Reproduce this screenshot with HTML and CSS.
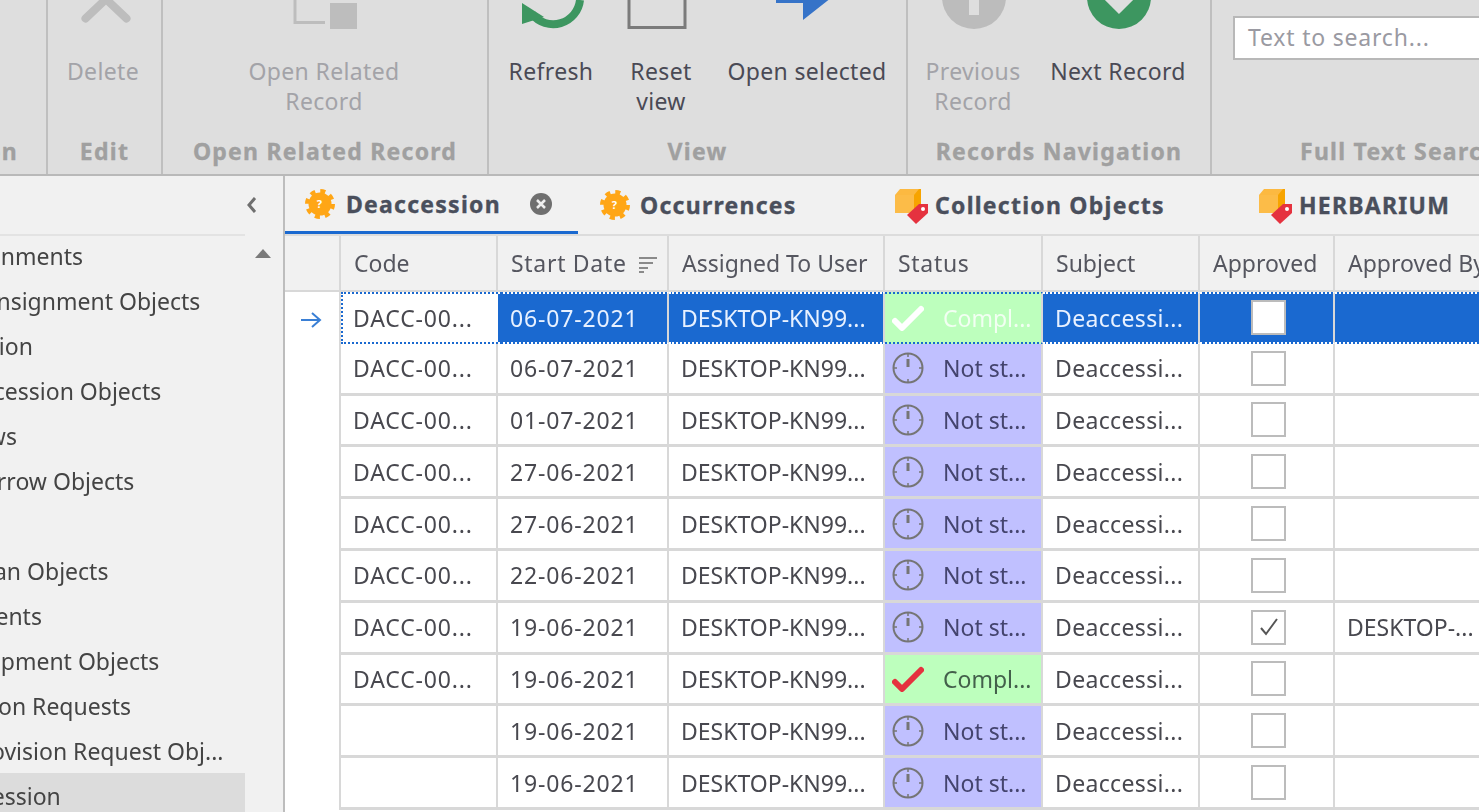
FILE: index.html
```html
<!DOCTYPE html>
<html>
<head lang="en">
<meta charset="UTF-8">
<title>Deaccession</title>
<link rel="stylesheet" href="styles.css">
</head>
<body>
<svg class="sprite">
    <symbol id="gear" viewBox="0 0 30 30">
        <circle cx="15" cy="15" r="11.5" fill="#ffa616"/>
        <circle cx="15" cy="15" r="12.5" fill="none" stroke="#ffa616" stroke-width="5" stroke-dasharray="4.9 4.9"/>
        <text x="15" y="19" text-anchor="middle" class="gear-mark">?</text>
    </symbol>
    <symbol id="cube" viewBox="0 0 34 38">
        <path d="M0 7 L5 1 H26 V24 H0 Z" fill="#fcb941"/>
        <path d="M19 7 L24 1 H26 V19 L19 25 Z" fill="#f7a400"/>
        <path d="M0 7 H19 V25 H0 Z" fill="#fcbc48"/>
        <path d="M12 27 L24 16 H33 V25 L21 36 Z" fill="#e5323f"/>
        <circle cx="28" cy="21" r="2" fill="#fff"/>
    </symbol>
    <symbol id="clock" viewBox="0 0 32 32">
        <circle cx="16" cy="16" r="14.5" fill="none" stroke="#757575" stroke-width="2"/>
        <path d="M16 7 V15" stroke="#757575" stroke-width="3"/>
        <path d="M16 2 V5 M16 27 V30 M2 16 H5 M27 16 H30" stroke="#757575" stroke-width="1.5"/>
    </symbol>
    <symbol id="tick" viewBox="0 0 32 26">
        <path d="M3 16 L10 23 L29 4" fill="none" stroke="currentColor" stroke-width="6" stroke-linecap="round" stroke-linejoin="round"/>
    </symbol>
</svg>

<header class="ribbon">
    <section class="group group-first">
        <div class="group-items"></div>
        <div class="group-title">Action</div>
    </section>
    <section class="group group-edit">
        <div class="group-items">
            <div class="btn btn-delete off">
                <svg class="btn-icon icon-delete" width="60" height="57" viewBox="0 0 60 57"><path d="M9.5 18.5 L30 -1 L50.5 18.5" fill="none" stroke="#bdbdbd" stroke-width="8" stroke-linecap="round" stroke-linejoin="round"/></svg>
                <span>Delete</span>
            </div>
        </div>
        <div class="group-title">Edit</div>
    </section>
    <section class="group group-related">
        <div class="group-items">
            <div class="btn btn-related off">
                <svg class="btn-icon" width="70" height="57" viewBox="0 0 70 57"><path d="M6 0 V22.5 H36" fill="none" stroke="#bdbdbd" stroke-width="3"/><rect x="41" y="3" width="27" height="26" fill="#bdbdbd"/></svg>
                <span>Open Related Record</span>
            </div>
        </div>
        <div class="group-title">Open Related Record</div>
    </section>
    <section class="group group-view">
        <div class="group-items">
            <div class="btn btn-refresh">
                <svg class="btn-icon icon-refresh" width="70" height="57" viewBox="0 0 70 57"><path d="M14 14 A27 27 0 0 0 62 0" fill="none" stroke="#3d9660" stroke-width="8"/><path d="M4 3 L4 24 L26 17 Z" fill="#3d9660"/></svg>
                <span>Refresh</span>
            </div>
            <div class="btn btn-reset">
                <svg class="btn-icon icon-reset" width="60" height="57" viewBox="0 0 60 57"><path d="M2 0 V27.5 H58 V0" fill="none" stroke="#7b7b7b" stroke-width="3"/></svg>
                <span>Reset view</span>
            </div>
            <div class="btn btn-open">
                <svg class="btn-icon icon-open" width="64" height="57" viewBox="0 0 64 57"><path d="M2 0 H29 V-6 H62 L29 20 V3 H2 Z" fill="#3673c8"/></svg>
                <span>Open selected</span>
            </div>
        </div>
        <div class="group-title">View</div>
    </section>
    <section class="group group-nav">
        <div class="group-items">
            <div class="btn btn-prev off">
                <svg class="btn-icon icon-nav" width="70" height="57" viewBox="0 0 70 57"><circle cx="35" cy="-3" r="32" fill="#bcbcbc"/><rect x="30" y="-10" width="10" height="25" fill="#dedede"/></svg>
                <span>Previous Record</span>
            </div>
            <div class="btn btn-next">
                <svg class="btn-icon icon-nav" width="70" height="57" viewBox="0 0 70 57"><circle cx="35" cy="-3" r="32" fill="#3d9660"/><path d="M19 -9 L35 7 L51 -9" fill="none" stroke="#dedede" stroke-width="10"/></svg>
                <span>Next Record</span>
            </div>
        </div>
        <div class="group-title">Records Navigation</div>
    </section>
    <section class="group group-search">
        <div class="group-items">
            <div class="search-box">Text to search...</div>
        </div>
        <div class="group-title">Full Text Search</div>
    </section>
</header>

<div class="workspace">
    <aside class="sidebar">
        <div class="sidebar-head">
            <svg width="12" height="18" viewBox="0 0 12 18"><path d="M9 2 L3 9 L9 16" fill="none" stroke="#6f6f6f" stroke-width="3"/></svg>
        </div>
        <div class="sidebar-body">
            <ul class="tree">
                <li class="parent">Consignments</li>
                <li class="child">Consignment Objects</li>
                <li class="parent">Accession</li>
                <li class="child">Accession Objects</li>
                <li class="parent">Borrows</li>
                <li class="child">Borrow Objects</li>
                <li class="parent">Loans</li>
                <li class="child">Loan Objects</li>
                <li class="parent">Shipments</li>
                <li class="child">Shipment Objects</li>
                <li class="parent">Provision Requests</li>
                <li class="child">Provision Request Obj...</li>
                <li class="parent current">Deaccession</li>
            </ul>
            <div class="scroll-col"><span class="scroll-up"></span></div>
        </div>
    </aside>

    <main class="content">
        <nav class="tabs">
            <div class="tab tab-active">
                <svg class="tab-gear" width="30" height="30"><use href="#gear"/></svg>
                <span>Deaccession</span>
                <svg class="tab-close" width="24" height="24" viewBox="0 0 24 24"><circle cx="12" cy="12" r="11" fill="#6f6f6f"/><path d="M8 8 L16 16 M16 8 L8 16" stroke="#eee" stroke-width="2.5"/></svg>
            </div>
            <div class="tab tab-occ">
                <svg class="tab-gear" width="30" height="30"><use href="#gear"/></svg>
                <span>Occurrences</span>
            </div>
            <div class="tab tab-coll">
                <svg class="tab-cube" width="34" height="38"><use href="#cube"/></svg>
                <span>Collection Objects</span>
            </div>
            <div class="tab tab-herb">
                <svg class="tab-cube" width="34" height="38"><use href="#cube"/></svg>
                <span>HERBARIUM</span>
            </div>
        </nav>

        <table class="grid">
            <colgroup>
                <col class="col-ind"><col class="col-code"><col class="col-date"><col class="col-user">
                <col class="col-status"><col class="col-subject"><col class="col-appr"><col class="col-by">
            </colgroup>
            <thead>
                <tr>
                    <th></th><th>Code</th>
                    <th class="th-wide">Start Date <svg class="sort-icon" width="20" height="18" viewBox="0 0 20 18"><path d="M1 2 H19 M1 7 H15 M1 12 H10 M1 16 H6" stroke="#8a8a8a" stroke-width="2"/></svg></th>
                    <th>Assigned To User</th><th class="th-wide">Status</th><th>Subject</th><th>Approved</th><th>Approved By</th>
                </tr>
            </thead>
            <tbody>
                <tr class="selected">
                    <td class="ind"><svg width="24" height="18" viewBox="0 0 24 18"><path d="M2 9 H21 M13 2 L21 9 L13 16" fill="none" stroke="#3a7fd5" stroke-width="2"/></svg></td>
                    <td class="focus wide">DACC-00...</td><td class="wide">06-07-2021</td><td>DESKTOP-KN99...</td>
                    <td class="st-done"><div class="status"><svg class="st-tick" width="32" height="26"><use href="#tick"/></svg><span>Compl...</span></div></td>
                    <td class="subj">Deaccessi...</td><td class="chk"><span class="box"></span></td><td></td>
                </tr>
                <tr>
                    <td class="ind"></td><td class="wide">DACC-00...</td><td class="wide">06-07-2021</td><td>DESKTOP-KN99...</td>
                    <td class="st-wait"><div class="status"><svg width="32" height="32"><use href="#clock"/></svg><span>Not st...</span></div></td>
                    <td class="subj">Deaccessi...</td><td class="chk"><span class="box"></span></td><td></td>
                </tr>
                <tr>
                    <td class="ind"></td><td class="wide">DACC-00...</td><td class="wide">01-07-2021</td><td>DESKTOP-KN99...</td>
                    <td class="st-wait"><div class="status"><svg width="32" height="32"><use href="#clock"/></svg><span>Not st...</span></div></td>
                    <td class="subj">Deaccessi...</td><td class="chk"><span class="box"></span></td><td></td>
                </tr>
                <tr>
                    <td class="ind"></td><td class="wide">DACC-00...</td><td class="wide">27-06-2021</td><td>DESKTOP-KN99...</td>
                    <td class="st-wait"><div class="status"><svg width="32" height="32"><use href="#clock"/></svg><span>Not st...</span></div></td>
                    <td class="subj">Deaccessi...</td><td class="chk"><span class="box"></span></td><td></td>
                </tr>
                <tr>
                    <td class="ind"></td><td class="wide">DACC-00...</td><td class="wide">27-06-2021</td><td>DESKTOP-KN99...</td>
                    <td class="st-wait"><div class="status"><svg width="32" height="32"><use href="#clock"/></svg><span>Not st...</span></div></td>
                    <td class="subj">Deaccessi...</td><td class="chk"><span class="box"></span></td><td></td>
                </tr>
                <tr>
                    <td class="ind"></td><td class="wide">DACC-00...</td><td class="wide">22-06-2021</td><td>DESKTOP-KN99...</td>
                    <td class="st-wait"><div class="status"><svg width="32" height="32"><use href="#clock"/></svg><span>Not st...</span></div></td>
                    <td class="subj">Deaccessi...</td><td class="chk"><span class="box"></span></td><td></td>
                </tr>
                <tr>
                    <td class="ind"></td><td class="wide">DACC-00...</td><td class="wide">19-06-2021</td><td>DESKTOP-KN99...</td>
                    <td class="st-wait"><div class="status"><svg width="32" height="32"><use href="#clock"/></svg><span>Not st...</span></div></td>
                    <td class="subj">Deaccessi...</td>
                    <td class="chk"><span class="box"><svg width="24" height="24" viewBox="0 0 24 24"><path d="M4 13 L9 19 L20 4" fill="none" stroke="#555" stroke-width="2"/></svg></span></td>
                    <td>DESKTOP-...</td>
                </tr>
                <tr>
                    <td class="ind"></td><td class="wide">DACC-00...</td><td class="wide">19-06-2021</td><td>DESKTOP-KN99...</td>
                    <td class="st-done"><div class="status"><svg class="st-red" width="32" height="26"><use href="#tick"/></svg><span>Compl...</span></div></td>
                    <td class="subj">Deaccessi...</td><td class="chk"><span class="box"></span></td><td></td>
                </tr>
                <tr>
                    <td class="ind"></td><td></td><td class="wide">19-06-2021</td><td>DESKTOP-KN99...</td>
                    <td class="st-wait"><div class="status"><svg width="32" height="32"><use href="#clock"/></svg><span>Not st...</span></div></td>
                    <td class="subj">Deaccessi...</td><td class="chk"><span class="box"></span></td><td></td>
                </tr>
                <tr>
                    <td class="ind"></td><td></td><td class="wide">19-06-2021</td><td>DESKTOP-KN99...</td>
                    <td class="st-wait"><div class="status"><svg width="32" height="32"><use href="#clock"/></svg><span>Not st...</span></div></td>
                    <td class="subj">Deaccessi...</td><td class="chk"><span class="box"></span></td><td></td>
                </tr>
            </tbody>
        </table>
    </main>
</div>
</body>
</html>
```

FILE: styles.css
```css
* {
    box-sizing: border-box;
}
html, body {
    margin: 0;
    height: 812px;
    overflow: hidden;
}
body {
    width: 1479px;
    background-color: #fff;
    font-family: "Noto Sans", "Open Sans", sans-serif;
    font-size: 23px;
    color: #444;
    filter: blur(0.5px);
}
.sprite {
    display: none;
}
.gear-mark {
    font-size: 11px;
    font-weight: 700;
    fill: #fff;
}

/* ribbon */
.ribbon {
    display: flex;
    height: 176px;
    background-color: #dedede;
    border-bottom: 2px solid #b9b9b9;
    overflow: hidden;
}
.group {
    flex: none;
    display: flex;
    flex-direction: column;
    border-right: 2px solid #bfbfbf;
}
.group-first { width: 48px; }
.group-edit { width: 115px; }
.group-related { width: 326px; }
.group-view { width: 419px; }
.group-nav { width: 304px; }
.group-search { width: 400px; border-right: none; }

.group-items {
    display: flex;
    height: 131px;
}
.group-title {
    height: 43px;
    line-height: 40px;
    text-align: center;
    font-weight: 700;
    letter-spacing: 1.25px;
    -webkit-text-stroke: 0.35px #a0a0a0;
    color: #a0a0a0;
    white-space: nowrap;
}
.group-first .group-title {
    direction: rtl;
    padding-right: 28px;
}
.group-search .group-title {
    padding-left: 88px;
    text-align: left;
}
.btn {
    flex: none;
    display: flex;
    flex-direction: column;
    align-items: center;
    text-align: center;
    line-height: 29.5px;
    letter-spacing: 0.35px;
    color: #4a4a55;
}
.btn span {
    display: block;
}
.btn.off {
    color: #a3a3a8;
}
.btn-icon {
    display: block;
    flex: none;
    overflow: visible;
}
.icon-delete { margin-left: 6px; }
.icon-refresh { margin-left: 4px; }
.icon-reset { margin-left: -8px; }
.icon-open { margin-left: -3px; }
.icon-nav { margin-left: 2px; }
.btn-delete { width: 110px; }
.btn-related { width: 322px; }
.btn-related span { width: 190px; }
.btn-refresh { width: 124px; }
.btn-reset { width: 96px; }
.btn-reset span { width: 70px; }
.btn-open { width: 196px; }
.btn-prev { width: 130px; }
.btn-prev span { width: 110px; }
.btn-next { width: 160px; }
.search-box {
    margin: 16px 0 0 21px;
    width: 380px;
    height: 44px;
    padding-left: 13px;
    line-height: 39px;
    letter-spacing: 0.8px;
    background-color: #fff;
    border: 2px solid #b8b8b8;
    color: #9a9aa2;
}

/* left panel */
.workspace {
    display: flex;
    height: 636px;
}
.sidebar {
    flex: none;
    width: 285px;
    background-color: #f1f1f1;
    border-right: 2px solid #bdbdbd;
    overflow: hidden;
}
.sidebar-head {
    width: 245px;
    height: 60px;
    display: flex;
    align-items: center;
    justify-content: flex-end;
    border-bottom: 2px solid #e3e3e3;
}
.sidebar-head svg {
    margin: 0 -13px 0 0;
}
.sidebar-body {
    display: flex;
}
.tree {
    flex: none;
    width: 245px;
    margin: 0;
    padding: 0;
    list-style: none;
    overflow: hidden;
}
.tree li {
    height: 45px;
    line-height: 40px;
    white-space: nowrap;
}
.tree .parent { text-indent: -73px; }
.tree .child { text-indent: -32px; }
.tree .current {
    background-color: #dcdcdc;
    height: 42px;
    margin-top: -3px;
    line-height: 46px;
}
.scroll-col {
    flex: 1;
    padding: 13px 0 0 10px;
}
.scroll-up {
    display: block;
    width: 0;
    height: 0;
    border-left: 8px solid transparent;
    border-right: 8px solid transparent;
    border-bottom: 9px solid #7a7a7a;
}

/* document tabs */
.content {
    flex: 1;
    min-width: 0;
    overflow: hidden;
}
.tabs {
    display: flex;
    height: 60px;
    background-color: #f1f1f1;
    border-bottom: 2px solid #dcdcdc;
    font-weight: 700;
    letter-spacing: 1.25px;
    -webkit-text-stroke: 0.35px #4a4f5c;
    color: #4a4f5c;
}
.tab {
    flex: none;
    display: flex;
    align-items: center;
    height: 58px;
    white-space: nowrap;
}
.tab-active {
    width: 293px;
    padding-left: 20px;
    border-bottom: 3px solid #1a69d0;
}
.tab-gear { margin-right: 11px; }
.tab-close { margin-left: 28px; }
.tab-occ { width: 295px; padding-left: 22px; }
.tab-occ .tab-gear { margin-right: 10px; }
.tab-coll { width: 364px; padding-left: 22px; }
.tab-herb { padding-left: 22px; }
.tab-cube { margin-right: 6px; margin-top: 3px; }

/* data grid */
.grid {
    width: 1200px;
    table-layout: fixed;
    border-collapse: separate;
    border-spacing: 0;
}
.col-ind { width: 56px; }
.col-code { width: 157px; }
.col-date { width: 171px; }
.col-user { width: 216px; }
.col-status { width: 158px; }
.col-subject { width: 157px; }
.col-appr { width: 135px; }
.col-by { width: 150px; }
.grid th {
    height: 56px;
    padding: 0 0 0 13px;
    text-align: left;
    font-weight: 400;
    white-space: nowrap;
    overflow: hidden;
    color: #55565f;
    background-color: #f1f1f1;
    border-right: 2px solid #d8d8d8;
    border-bottom: 2px solid #d8d8d8;
}
.grid th.th-wide {
    letter-spacing: 0.7px;
}
.sort-icon {
    margin-left: 5px;
    vertical-align: -2px;
}
.grid td {
    height: 51.8px;
    padding: 0 0 0 12px;
    white-space: nowrap;
    overflow: hidden;
    color: #48484f;
    border-right: 2px solid #d8d8d8;
    border-bottom: 3px solid #d8d8d8;
}
.grid td.wide {
    letter-spacing: 0.85px;
}
.grid td.subj {
    letter-spacing: 0.35px;
}
.grid td.ind {
    padding: 4px 0 0 14px;
    border-bottom: none;
}
.grid td.st-wait, .grid td.st-done {
    padding: 0;
}
.grid td.st-wait {
    background-color: #c0c0ff;
    color: #44446e;
}
.grid td.st-done {
    background-color: #bdffbd;
    color: #43604b;
}
.status {
    display: flex;
    align-items: center;
    padding-left: 7px;
}
.status svg {
    flex: none;
    color: #e5323f;
}
.status span {
    margin-left: 19px;
}
.status .st-tick { color: #fff; }
.grid td.chk {
    padding: 0 0 0 51px;
}
.box {
    display: flex;
    align-items: center;
    justify-content: center;
    width: 35px;
    height: 35px;
    background-color: #fff;
    border: 2px solid #bcbcbc;
}

/* current row */
.selected td {
    background-color: #1a69d0;
    border-top: 2px dotted #fff;
    border-bottom: 2px dotted #fff;
}
.grid .selected td {
    color: #e8f1ff;
}
.grid .selected td.ind {
    background-color: #fff;
    border-top: none;
    border-bottom: none;
}
.grid .selected td.focus {
    background-color: #fff;
    color: #48484f;
    border: 2px dotted #1a69d0;
    border-right: none;
    padding-left: 10px;
}
.grid .selected td.st-done {
    background-color: #bdffbd;
    color: #f2fff2;
    border-top-color: #1a69d0;
    border-bottom-color: #1a69d0;
}
```
